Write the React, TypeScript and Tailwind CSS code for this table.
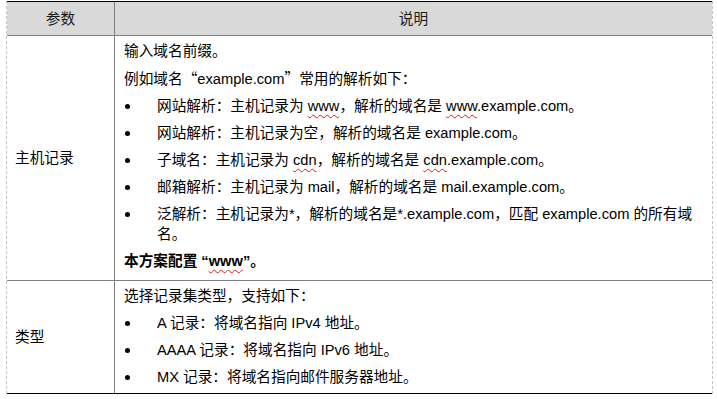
const cjk = "font-['Noto_Sans_CJK_SC',sans-serif]";
const squiggle = "underline decoration-wavy decoration-[#e01b1b] decoration-1 underline-offset-[3px]";

const Bullet = ({ children }: { children: React.ReactNode }) => (
  <div className="flex">
    <span className="w-[33px] shrink-0 flex items-center h-[20px]">
      <span className="block w-[5px] h-[5px] rounded-full bg-black ml-[1px]" />
    </span>
    <span className="flex-1">{children}</span>
  </div>
);

// full-width quote marks, as the CJK document font draws them
const OpenQ = () => <span className={`inline-block w-[1em] text-right ${cjk}`}>“</span>;
const CloseQ = () => <span className={`inline-block w-[1em] text-left ${cjk}`}>”</span>;

export default function App() {
  return (
    <div className="w-[717px] h-[399px] bg-white pt-px text-[14.67px] leading-[20px] text-black font-['Liberation_Sans','Noto_Sans_CJK_SC',sans-serif]">
      <div className="ml-[6px] w-[707px] border-x border-dashed border-[#c4c4c4]">
        {/* header */}
        <div className="grid grid-cols-[108px_1fr] h-[35px] bg-[#d9d9d9] border-t border-b border-t-black border-b-[#808080]">
          <div className="flex items-center justify-center border-r border-[#808080] text-[#1a1a1a]">参数</div>
          <div className="flex items-center justify-center text-[#1a1a1a]">说明</div>
        </div>

        {/* 主机记录 */}
        <div className="grid grid-cols-[108px_1fr] border-b border-[#808080]">
          <div className="flex items-center pl-[8px] border-r border-[#808080]">主机记录</div>
          <div className="flex flex-col gap-[7px] pl-[9px] pr-[4px] pt-[5px] pb-[9px]">
            <p>输入域名前缀。</p>
            <p>
              例如域名<OpenQ />example.com<CloseQ />常用的解析如下：
            </p>
            <Bullet>
              网站解析：主机记录为 <span className={squiggle}>www</span>，解析的域名是 <span className={squiggle}>www</span>.example.com。
            </Bullet>
            <Bullet>网站解析：主机记录为空，解析的域名是 example.com。</Bullet>
            <Bullet>
              子域名：主机记录为 <span className={squiggle}>cdn</span>，解析的域名是 <span className={squiggle}>cdn</span>.example.com。
            </Bullet>
            <Bullet>邮箱解析：主机记录为 mail，解析的域名是 mail.example.com。</Bullet>
            <Bullet>泛解析：主机记录为*，解析的域名是*.example.com，匹配 example.com 的所有域名。</Bullet>
            <p className="font-bold">
              本方案配置 “<span className={squiggle}>www</span>”。
            </p>
          </div>
        </div>

        {/* 类型 */}
        <div className="grid grid-cols-[108px_1fr] border-b border-black">
          <div className="flex items-center pl-[8px] border-r border-[#808080]">类型</div>
          <div className="flex flex-col gap-[7px] pl-[9px] pr-[4px] pt-[5px] pb-[6px]">
            <p>选择记录集类型，支持如下：</p>
            <Bullet>A 记录：将域名指向 IPv4 地址。</Bullet>
            <Bullet>AAAA 记录：将域名指向 IPv6 地址。</Bullet>
            <Bullet>MX 记录：将域名指向邮件服务器地址。</Bullet>
          </div>
        </div>
      </div>
    </div>
  );
}
